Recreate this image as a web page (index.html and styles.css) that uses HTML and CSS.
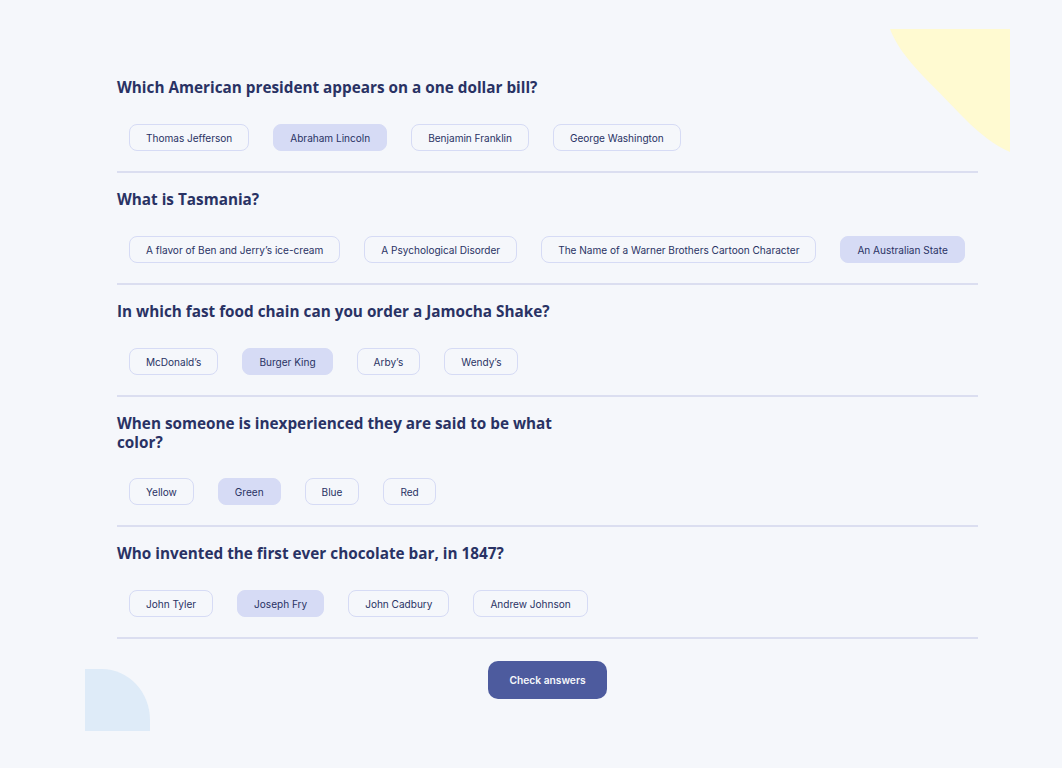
FILE: index.html
```html
<!DOCTYPE html>
<html lang="en">
<head>
<meta charset="utf-8">
<title>Quizzical</title>
<link rel="stylesheet" href="styles.css">
</head>
<body>
<div class="blob blob-yellow">
  <svg width="120" height="123" viewBox="0 0 120 123"><path d="M0 0 H120 V123 C104 116 92 106 80 95 C66 81 48 62 32 46 C18 31 6 16 0 0 Z" fill="#FFFAD1"/></svg>
</div>
<div class="blob blob-blue"></div>
<main class="quiz">
  <section class="question">
    <h2 class="q-title">Which American president appears on a one dollar bill?</h2>
    <div class="options">
      <button class="opt">Thomas Jefferson</button>
      <button class="opt selected">Abraham Lincoln</button>
      <button class="opt">Benjamin Franklin</button>
      <button class="opt">George Washington</button>
    </div>
  </section>
  <section class="question">
    <h2 class="q-title">What is Tasmania?</h2>
    <div class="options">
      <button class="opt">A flavor of Ben and Jerry’s ice-cream</button>
      <button class="opt">A Psychological Disorder</button>
      <button class="opt">The Name of a Warner Brothers Cartoon Character</button>
      <button class="opt selected">An Australian State</button>
    </div>
  </section>
  <section class="question">
    <h2 class="q-title">In which fast food chain can you order a Jamocha Shake?</h2>
    <div class="options">
      <button class="opt">McDonald’s</button>
      <button class="opt selected">Burger King</button>
      <button class="opt">Arby’s</button>
      <button class="opt">Wendy’s</button>
    </div>
  </section>
  <section class="question">
    <h2 class="q-title two-line">When someone is inexperienced they are said to be what color?</h2>
    <div class="options">
      <button class="opt">Yellow</button>
      <button class="opt selected">Green</button>
      <button class="opt">Blue</button>
      <button class="opt">Red</button>
    </div>
  </section>
  <section class="question">
    <h2 class="q-title">Who invented the first ever chocolate bar, in 1847?</h2>
    <div class="options">
      <button class="opt">John Tyler</button>
      <button class="opt selected">Joseph Fry</button>
      <button class="opt">John Cadbury</button>
      <button class="opt">Andrew Johnson</button>
    </div>
  </section>
  <div class="actions">
    <button class="check">Check answers</button>
  </div>
</main>
</body>
</html>
```

FILE: styles.css
```css
* { box-sizing: border-box; }
html, body { margin: 0; padding: 0; }
body {
  background: #F5F7FB;
  min-height: 768px;
  position: relative;
  overflow: hidden;
  font-family: "Inter", "Liberation Sans", sans-serif;
  color: #293264;
}
.blob { position: absolute; }
.blob-yellow { left: 890px; top: 29px; width: 120px; height: 123px; }
.blob-yellow svg { display: block; }
.blob-blue {
  left: 85px; top: 669px; width: 65px; height: 62px;
  background: #DEEBF8;
  border-top-right-radius: 48px 51px;
}
.quiz {
  position: relative;
  width: 861px;
  margin-left: 117px;
  padding-top: 61px;
}
.question {
  padding-top: 16px;
  padding-bottom: 20px;
  border-bottom: 2px solid #DBDEF0;
}
.q-title {
  margin: 0;
  padding-top: 1px;
  max-width: 450px;
  font-family: "Open Sans", "Liberation Sans", sans-serif;
  font-weight: 700;
  font-size: 15.3px;
  line-height: 19px;
  color: #293264;
}
.q-title.two-line { line-height: 18.5px; }
.options {
  display: flex;
  gap: 24px;
  margin-top: 27px;
  margin-left: 12px;
}
.opt {
  flex: none;
  white-space: nowrap;
  height: 27px;
  padding: 1px 16px 0;
  border: 1px solid #D6DBF5;
  border-radius: 8px;
  background: transparent;
  font-family: "Inter", "Liberation Sans", sans-serif;
  font-size: 10.05px;
  font-weight: 400;
  color: #293264;
  line-height: 1;
}
.opt.selected {
  background: #D6DBF5;
  border-color: #D6DBF5;
}
.actions {
  display: flex;
  justify-content: center;
  padding-top: 22px;
}
.check {
  width: 119px;
  height: 38px;
  border: none;
  border-radius: 10px;
  background: #4D5B9E;
  color: #F5F7FB;
  font-family: "Inter", "Liberation Sans", sans-serif;
  font-size: 10.24px;
  font-weight: 600;
}
```
